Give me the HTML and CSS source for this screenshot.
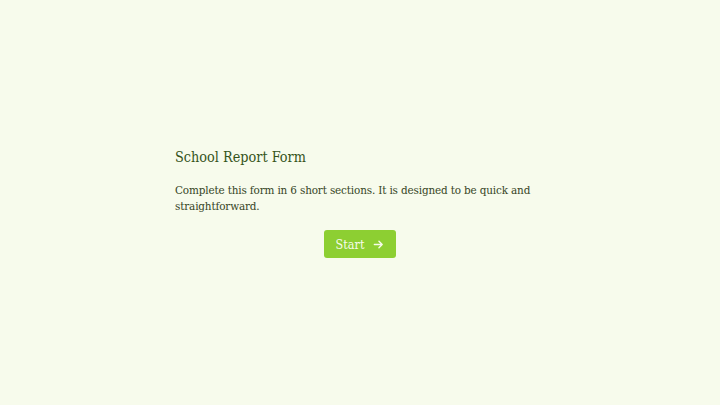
FILE: index.html
```html
<!DOCTYPE html>
<html>
<head>
<meta charset="utf-8">
<link rel="stylesheet" href="styles.css">
</head>
<body>
<main class="page">
  <section class="intro">
    <h1 class="title">School Report Form</h1>
    <p class="lead">Complete this form in 6 short sections. It is designed to be quick and straightforward.</p>
    <div class="actions">
      <button class="start">Start <svg class="arrow" viewBox="0 0 12 12" width="11" height="11"><path d="M1.5 6h8.5M6.5 2.5 10 6l-3.5 3.5" fill="none" stroke="currentColor" stroke-width="1.6" stroke-linecap="round" stroke-linejoin="round"/></svg></button>
    </div>
  </section>
</main>
</body>
</html>
```
FILE: styles.css
```css
html, body { margin: 0; height: 100%; }
body {
  background: #f7fbec;
  font-family: "DejaVu Serif Condensed", "DejaVu Serif", "Liberation Serif", serif;
  font-stretch: condensed;
  color: #3d5222;
}
.page {
  height: 100%;
  display: flex;
  align-items: center;
  justify-content: center;
}
.intro {
  width: 370px;
  display: flex;
  flex-direction: column;
}
.title {
  margin: 0 0 15px;
  font-size: 14.3px;
  font-weight: normal;
  color: #35531a;
  line-height: 20px;
}
.lead {
  margin: 0 0 16px;
  font-size: 11.6px;
  letter-spacing: -0.15px;
  line-height: 16px;
  color: #36451f;
}
.actions { display: flex; justify-content: center; }
.start {
  display: flex;
  align-items: center;
  gap: 9px;
  height: 28px;
  padding: 0 12px;
  border: none;
  border-radius: 3px;
  background: #8dcf32;
  color: #f6fbea;
  font-family: inherit;
  font-stretch: condensed;
  font-size: 12.5px;
}
.arrow { display: block; }
```
